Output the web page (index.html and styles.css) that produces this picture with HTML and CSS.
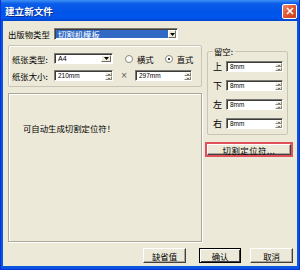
FILE: index.html
```html
<!DOCTYPE html>
<html lang="zh-CN">
<head>
  <meta charset="UTF-8">
  <title>建立新文件</title>
  <link rel="stylesheet" href="styles.css">
</head>
<body>
  <div class="window">
    <div class="titlebar">
      <span class="title">建立新文件</span>
      <span class="close">
        <svg width="8" height="8" viewBox="0 0 8 8"><path d="M1 1L7 7M7 1L1 7" stroke="#fff" stroke-width="1.6"/></svg>
      </span>
    </div>

    <div class="client">
      <div class="type-row">
        <span class="label type-label">出版物类型</span>
        <div class="combo combo-wide">
          <span class="combo-text selected">切割机模板</span>
          <span class="drop drop-small"><svg width="5" height="3" viewBox="0 0 5 3"><path d="M0 0H5L2.5 3Z" fill="#000"/></svg></span>
        </div>
      </div>

      <div class="main">
        <div class="left">
          <div class="group paper">
            <div class="line">
              <span class="label">纸张类型:</span>
              <div class="combo combo-paper">
                <span class="combo-text">A4</span>
                <span class="drop"><svg width="5" height="3" viewBox="0 0 5 3"><path d="M0 0H5L2.5 3Z" fill="#000"/></svg></span>
              </div>
              <span class="radio"></span><span class="radio-text">横式</span>
              <span class="radio checked"></span><span class="radio-text">直式</span>
            </div>
            <div class="line">
              <span class="label">纸张大小:</span>
              <div class="spinbox size-w">
                <span class="spin-text">210mm</span>
                <span class="spin"><i class="up"></i><i class="down"></i></span>
              </div>
              <span class="times">×</span>
              <div class="spinbox size-h">
                <span class="spin-text">297mm</span>
                <span class="spin"><i class="up"></i><i class="down"></i></span>
              </div>
            </div>
          </div>

          <div class="panel">
            <p class="hint">可自动生成切割定位符！</p>
          </div>
        </div>

        <div class="right">
          <fieldset class="margins">
            <legend>留空:</legend>
            <div class="margin-row">
              <span class="side">上</span>
              <div class="spinbox side-box"><span class="spin-text">8mm</span><span class="spin"><i class="up"></i><i class="down"></i></span></div>
            </div>
            <div class="margin-row">
              <span class="side">下</span>
              <div class="spinbox side-box"><span class="spin-text">8mm</span><span class="spin"><i class="up"></i><i class="down"></i></span></div>
            </div>
            <div class="margin-row">
              <span class="side">左</span>
              <div class="spinbox side-box"><span class="spin-text">8mm</span><span class="spin"><i class="up"></i><i class="down"></i></span></div>
            </div>
            <div class="margin-row">
              <span class="side">右</span>
              <div class="spinbox side-box"><span class="spin-text">8mm</span><span class="spin"><i class="up"></i><i class="down"></i></span></div>
            </div>
          </fieldset>

          <div class="marker-wrap">
            <button class="btn marker">切割定位符...</button>
          </div>
        </div>
      </div>

      <div class="footer">
        <button class="btn btn-default-val">缺省值</button>
        <button class="btn btn-ok">确认</button>
        <button class="btn btn-cancel">取消</button>
      </div>
    </div>
  </div>
</body>
</html>
```

FILE: styles.css
```css
body {
  margin: 0;
  width: 300px;
  height: 270px;
  font-family: "Noto Sans CJK SC", "DejaVu Sans", sans-serif;
  font-size: 8.4px;
  color: #000;
  background: #ece9d8;
}

.window {
  height: 270px;
  display: flex;
  flex-direction: column;
  background: #0a55e0;
  box-sizing: border-box;
  border-left: 1px solid #0831d9;
  border-right: 1px solid #0831d9;
  border-bottom: 1px solid #0831d9;
}

/* barre de titre bleue facon XP */
.titlebar {
  height: 21px;
  display: flex;
  align-items: center;
  justify-content: space-between;
  background: linear-gradient(#3d8ff5 0%, #0b5ce8 18%, #0055e8 55%, #0056ec 85%, #0044cc 100%);
}

.title {
  padding-left: 4px;
  color: #fff;
  font-weight: bold;
  font-size: 9.6px;
  text-shadow: 1px 1px #0a2a8a;
}

.close {
  width: 13px;
  height: 13px;
  margin-right: 2px;
  margin-top: 1px;
  display: flex;
  align-items: center;
  justify-content: center;
  border: 1px solid #fff;
  border-radius: 2px;
  background: linear-gradient(135deg, #f08a6a 0%, #e0552e 50%, #c8401c 100%);
}

.client {
  flex: 1;
  margin: 0 2px 3px 2px;
  padding: 7px 4px 0 5px;
  background: #ece9d8;
  display: flex;
  flex-direction: column;
}

.label {
  white-space: nowrap;
}

.type-row {
  display: flex;
  align-items: center;
  height: 12px;
}

.type-label {
  width: 46px;
}

/* listes deroulantes */
.combo {
  display: flex;
  align-items: stretch;
  box-sizing: border-box;
  background: #fff;
  border: 1px solid;
  border-color: #7b7a72 #fff #fff #7b7a72;
  box-shadow: inset 1px 1px #3c3c3c;
}

.combo-wide {
  width: 124px;
  height: 12px;
  padding: 1px;
}

.combo-paper {
  width: 59px;
  height: 11px;
  padding: 1px;
}

.combo-text {
  flex: 1;
  padding-left: 2px;
  font-family: "Liberation Sans", sans-serif;
  font-size: 7px;
  line-height: 8px;
}

.combo-text.selected {
  background: #316ac5;
  color: #fff;
  font-family: "Noto Sans CJK SC", sans-serif;
  font-size: 8.4px;
  line-height: 9px;
}

.drop {
  width: 10px;
  display: flex;
  align-items: center;
  justify-content: center;
  box-sizing: border-box;
  background: #ece9d8;
  border: 1px solid;
  border-color: #fff #6e6d66 #6e6d66 #fff;
}

.drop-small {
  width: 8px;
}

.main {
  display: flex;
  align-items: flex-start;
  margin-top: 5px;
}

.left {
  width: 194px;
}

.group {
  box-sizing: border-box;
  border: 1px solid #c8c5b4;
  border-radius: 2px;
  box-shadow: inset 1px 1px #fff;
}

.paper {
  height: 42px;
  padding: 7px 0 0 3px;
}

.line {
  display: flex;
  align-items: center;
  height: 11px;
}

.line + .line {
  margin-top: 6px;
}

.line .label {
  width: 42px;
}

.radio {
  width: 8px;
  height: 8px;
  box-sizing: border-box;
  margin-left: 12px;
  border: 1px solid #8a887c;
  border-radius: 50%;
  background: #fff;
  position: relative;
}

.radio + .radio-text + .radio {
  margin-left: 11px;
}

.radio.checked::after {
  content: "";
  position: absolute;
  left: 2px;
  top: 2px;
  width: 2px;
  height: 2px;
  border-radius: 50%;
  background: #000;
}

.radio-text {
  margin-left: 4px;
}

/* champs numeriques avec fleches */
.spinbox {
  display: flex;
  box-sizing: border-box;
  height: 11px;
  background: #fff;
  border: 1px solid;
  border-color: #7b7a72 #fff #fff #7b7a72;
  box-shadow: inset 1px 1px #3c3c3c;
  padding: 1px 0 0 1px;
}

.size-w {
  width: 59px;
}

.size-h {
  width: 57px;
}

.side-box {
  width: 57px;
}

.spin-text {
  flex: 1;
  padding-left: 2px;
  font-family: "Liberation Sans", sans-serif;
  font-size: 6.5px;
  line-height: 8px;
}

.spin {
  width: 7px;
  display: flex;
  flex-direction: column;
  background: #ece9d8;
}

.spin i {
  flex: 1;
  display: flex;
  align-items: center;
  justify-content: center;
  border: 1px solid;
  border-color: #fff #8a887c #8a887c #fff;
}

.spin i::after {
  content: "";
  border-left: 1.5px solid transparent;
  border-right: 1.5px solid transparent;
}

.spin .up::after {
  border-bottom: 1.5px solid #000;
}

.spin .down::after {
  border-top: 1.5px solid #000;
}

.times {
  width: 22px;
  text-align: center;
  color: #555;
  font-family: "DejaVu Sans", sans-serif;
  font-size: 8px;
}

.panel {
  box-sizing: border-box;
  height: 149px;
  margin-top: 6px;
  border: 1px solid #aca899;
  box-shadow: inset 1px 1px #fff, 1px 1px #fff;
  padding: 28px 0 0 14px;
}

.hint {
  margin: 0;
  line-height: 12px;
}

.right {
  width: 88px;
  margin-left: 3px;
}

.margins {
  width: 81px;
  box-sizing: border-box;
  margin: 1px 0 0 2px;
  padding: 0 0 5px 5px;
  border: 1px solid #c8c5b4;
  border-radius: 2px;
  min-width: 0;
}

.margins legend {
  margin-left: 0;
  padding: 0 2px 0 1px;
  line-height: 10px;
}

.margin-row {
  display: flex;
  align-items: center;
  height: 11px;
  margin-top: 8px;
}

.margin-row:first-of-type {
  margin-top: 5px;
}

.side {
  width: 13px;
  font-size: 9px;
}

.btn {
  font-family: "Noto Sans CJK SC", sans-serif;
  font-size: 8.4px;
  line-height: 10px;
  padding: 0;
  box-sizing: border-box;
  background: #ece9d8;
  border: 1px solid;
  border-color: #fff #404040 #404040 #fff;
  box-shadow: inset -1px -1px #aca899;
  color: #000;
}

.marker-wrap {
  margin-top: 7px;
  height: 15px;
  box-sizing: border-box;
  border: 2px solid #e0505a;
}

.marker {
  width: 100%;
  height: 100%;
  letter-spacing: 0.5px;
}

.footer {
  display: flex;
  margin-top: 6px;
  padding-left: 135px;
}

.footer .btn {
  height: 15px;
}

.btn-default-val {
  width: 43px;
}

.btn-ok {
  width: 42px;
  margin-left: 13px;
  border-color: #000;
  box-shadow: inset 1px 1px #fff, inset -1px -1px #404040;
}

.btn-cancel {
  width: 43px;
  margin-left: 9px;
}
```
